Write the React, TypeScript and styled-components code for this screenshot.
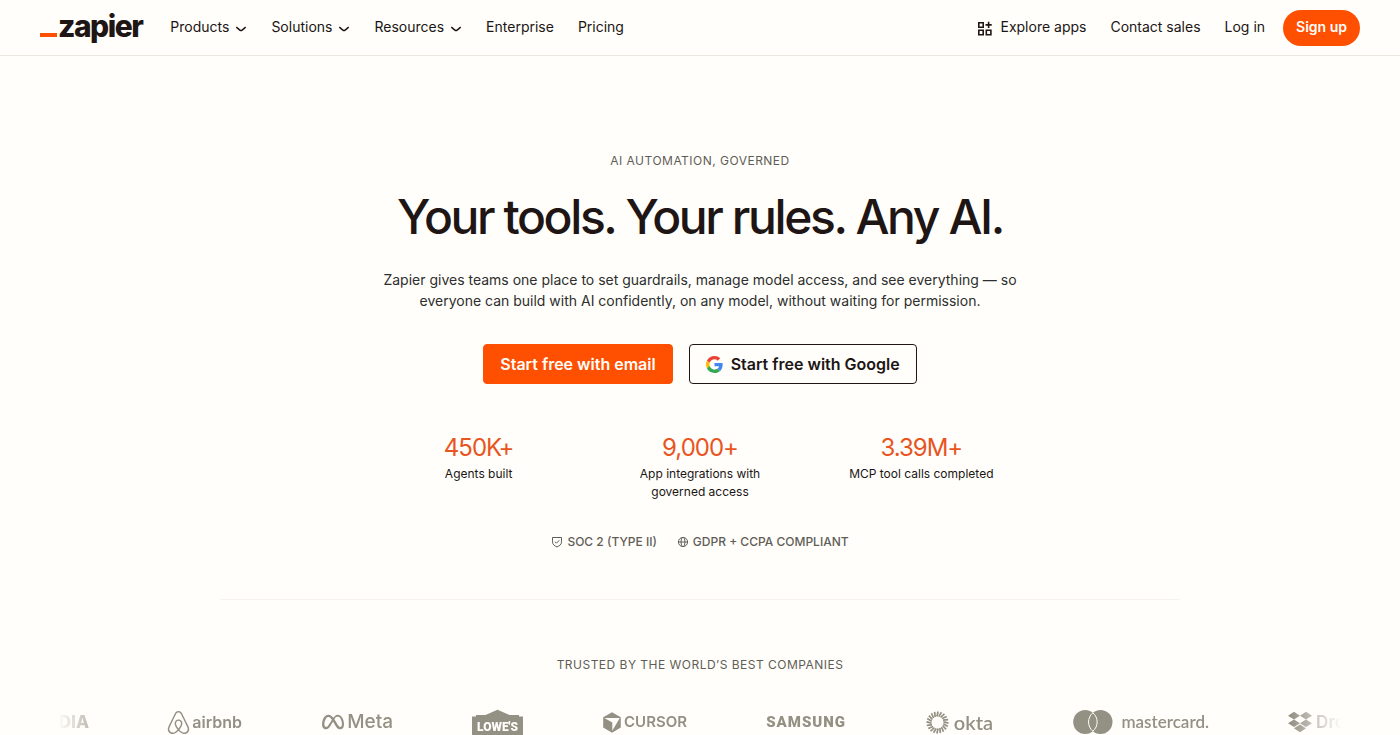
import React from "react";
import styled, { createGlobalStyle } from "styled-components";
import { SiAirbnb, SiMeta, SiDropbox } from "react-icons/si";

const color = {
  page: "#fffefa",
  ink: "#201515",
  text: "#2d2e2e",
  muted: "#5f5d57",
  orange: "#ff4f00",
  stat: "#e8551f",
  line: "#ebe9df",
  logo: "#939084",
};

const GlobalStyle = createGlobalStyle`
  *, *::before, *::after { box-sizing: border-box; }
  body {
    margin: 0;
    background: ${color.page};
    color: ${color.ink};
    font-family: Inter, "Liberation Sans", sans-serif;
    font-size: 14px;
    line-height: 21px;
  }
  h1, p, ul, dl, dd { margin: 0; padding: 0; }
  svg { display: block; flex: none; }
`;

const Header = styled.header`
  display: flex;
  align-items: center;
  justify-content: space-between;
  height: 56px;
  padding: 0 40px;
  border-bottom: 1px solid ${color.line};
`;

const HeaderGroup = styled.nav<{ $gap: number }>`
  display: flex;
  align-items: center;
  gap: ${(p) => p.$gap}px;
`;

const Brand = styled.a`
  display: flex;
  align-items: baseline;
  padding-bottom: 4px;
  color: ${color.ink};
  font-size: 30px;
  font-weight: 800;
  line-height: 32px;
  letter-spacing: -0.05em;
  text-decoration: none;

  &::before {
    content: "";
    width: 17px;
    height: 4px;
    margin-right: 1px;
    background: ${color.orange};
  }
`;

const NavList = styled.ul`
  display: flex;
  align-items: center;
  gap: 24px;
  padding-bottom: 2px;
  list-style: none;
`;

const MenuButton = styled.button`
  display: flex;
  align-items: center;
  gap: 6px;
  padding: 0;
  border: 0;
  background: none;
  color: ${color.ink};
  font: inherit;
  cursor: pointer;
`;

const NavLink = styled.a`
  display: flex;
  align-items: center;
  gap: 8px;
  color: ${color.ink};
  text-decoration: none;
`;

const SignUp = styled.a`
  display: flex;
  align-items: center;
  height: 36px;
  padding: 0 13px 2px;
  border-radius: 18px;
  background: ${color.orange};
  color: ${color.page};
  font-weight: 600;
  text-decoration: none;
`;

const Hero = styled.section`
  display: flex;
  flex-direction: column;
  align-items: center;
  max-width: 960px;
  margin: 0 auto;
  padding: 96px 0 48px;
  border-bottom: 1px solid #f5f3eb;
  text-align: center;
`;

const Eyebrow = styled.p`
  color: ${color.muted};
  font-size: 12px;
  line-height: 18px;
  letter-spacing: 0.04em;
  text-align: center;
  text-transform: uppercase;
`;

const Title = styled.h1`
  margin-top: 19px;
  font-size: 48px;
  font-weight: 500;
  line-height: 56px;
  letter-spacing: -0.05em;
`;

const Lead = styled.p`
  max-width: 640px;
  margin-top: 24px;
  color: ${color.text};
`;

const Actions = styled.div`
  display: flex;
  gap: 16px;
  margin-top: 33px;
`;

const ActionButton = styled.button<{ $primary?: boolean }>`
  display: flex;
  align-items: center;
  gap: 8px;
  height: 40px;
  padding: 0 16px;
  border: 1px solid ${(p) => (p.$primary ? color.orange : color.ink)};
  border-radius: 4px;
  background: ${(p) => (p.$primary ? color.orange : color.page)};
  color: ${(p) => (p.$primary ? color.page : color.ink)};
  font: inherit;
  font-size: 16px;
  font-weight: 600;
  cursor: pointer;
`;

const Stats = styled.dl`
  display: grid;
  grid-template-columns: repeat(3, 1fr);
  gap: 24px;
  width: 100%;
  max-width: 640px;
  margin-top: 48px;
`;

const Stat = styled.div`
  display: flex;
  flex-direction: column-reverse;
  justify-content: flex-end;
`;

const StatLabel = styled.dt`
  font-size: 12px;
  line-height: 18px;
  text-wrap: balance;
`;

const StatValue = styled.dd`
  margin-bottom: 1px;
  color: ${color.stat};
  font-size: 24px;
  line-height: 32px;
  letter-spacing: -1px;
`;

const Badges = styled.ul`
  display: flex;
  gap: 20px;
  margin-top: 32px;
  list-style: none;
`;

const Badge = styled.li`
  display: flex;
  align-items: center;
  gap: 4px;
  color: ${color.muted};
  font-size: 12px;
  font-weight: 500;
  line-height: 18px;
`;

const Trusted = styled.section`
  padding-top: 56px;
  overflow: hidden;
`;

const LogoRow = styled.ul`
  display: flex;
  align-items: center;
  gap: 79px;
  height: 26px;
  margin-top: 35px;
  overflow: hidden;
  list-style: none;
  mask-image: linear-gradient(
    to right,
    transparent 58px,
    #000 110px,
    #000 calc(100% - 110px),
    transparent calc(100% - 58px)
  );
`;

const Logo = styled.li<{ $width: number; $gap?: number }>`
  display: flex;
  flex: none;
  align-items: center;
  justify-content: flex-end;
  gap: ${(p) => p.$gap ?? 4}px;
  width: ${(p) => p.$width}px;
  color: ${color.logo};
`;

const Word = styled.span<{ $size: number; $weight: number; $family?: string; $spacing?: number }>`
  font-family: ${(p) => p.$family ?? "Inter"}, sans-serif;
  font-size: ${(p) => p.$size}px;
  font-weight: ${(p) => p.$weight};
  line-height: 24px;
  letter-spacing: ${(p) => p.$spacing ?? 0}px;
  white-space: nowrap;
`;

const Chevron = () => (
  <svg width="12" height="14" viewBox="0 0 12 14" fill="none" aria-hidden="true">
    <path d="M1.3 7.200 4.900 10.100Q6 11 7.100 10.100L10.700 7.200" stroke="currentColor" strokeWidth="1.5" />
  </svg>
);

const AppsIcon = () => (
  <svg width="15" height="19" viewBox="0 -4 15 19" fill="none" stroke="currentColor" strokeWidth="1.6" aria-hidden="true">
    <path d="M1.800 1.800h4.400v4.400H1.800zM1.800 9.300h4.400v4.400H1.800zM9.300 9.300h4.600v4.400H9.300zM11.600.8v6.200M8.500 3.900h6.200" />
  </svg>
);

const GoogleIcon = () => (
  <svg width="17" height="17" viewBox="0 0 48 48" aria-hidden="true">
    <path fill="#EA4335" d="M24 9.5c3.54 0 6.71 1.22 9.21 3.6l6.85-6.85C35.9 2.38 30.47 0 24 0 14.62 0 6.51 5.38 2.56 13.22l7.98 6.19C12.43 13.72 17.74 9.5 24 9.5z" />
    <path fill="#4285F4" d="M46.98 24.55c0-1.57-.15-3.09-.38-4.55H24v9.02h12.94c-.58 2.96-2.26 5.48-4.78 7.18l7.73 6c4.51-4.18 7.09-10.36 7.09-17.65z" />
    <path fill="#FBBC05" d="M10.53 28.59A14.5 14.5 0 0 1 9.77 24c0-1.6.27-3.14.76-4.59l-7.98-6.19A23.9 23.9 0 0 0 0 24c0 3.88.92 7.54 2.56 10.78l7.97-6.19z" />
    <path fill="#34A853" d="M24 48c6.48 0 11.93-2.13 15.89-5.81l-7.73-6c-2.15 1.45-4.92 2.3-8.16 2.3-6.26 0-11.57-4.22-13.47-9.91l-7.98 6.19C6.51 42.62 14.62 48 24 48z" />
  </svg>
);

const ShieldIcon = () => (
  <svg width="12" height="12" viewBox="0 0 12 12" fill="none" stroke="currentColor" strokeWidth="1" aria-hidden="true">
    <path d="M1.5 1.5h9v4.3c0 2.7-2 4-4.5 5.2C3.5 9.8 1.5 8.5 1.5 5.8z" />
    <path d="m3.9 5.7 1.5 1.5 2.8-2.9" />
  </svg>
);

const GlobeIcon = () => (
  <svg width="12" height="12" viewBox="0 0 12 12" fill="none" stroke="currentColor" strokeWidth="1" aria-hidden="true">
    <circle cx="6" cy="6" r="4.6" />
    <ellipse cx="6" cy="6" rx="2" ry="4.6" />
    <path d="M1.4 6h9.2" />
  </svg>
);

const LowesLogo = () => (
  <svg width="51" height="26" viewBox="0 0 51 26" role="img" aria-label="Lowe's">
    <path d="M0 26V7.5h4V6h9.5L25.500.7 37.500 6H47v1.500h4V26z" fill="currentColor" />
    <text x="25.5" y="21.500" textAnchor="middle" fill={color.page} fontFamily="Roboto, sans-serif" fontSize="12" fontWeight="900">
      LOWE'S
    </text>
  </svg>
);

const CursorMark = () => (
  <svg width="18" height="21" viewBox="0 0 18 21" aria-hidden="true">
    <path d="M9 .3 17.8 5.3v10.3L9 20.7.2 15.6V5.3z" fill="currentColor" />
    <path d="M1.400 6h15.400L9.300 18.800V10.500z" fill={color.page} />
  </svg>
);

const OktaMark = () => (
  <svg width="23" height="23" viewBox="-12 -12 24 24" stroke="currentColor" strokeWidth="1.8" aria-hidden="true">
    {Array.from({ length: 20 }, (_, i) => (
      <path key={i} d="M-.6-6.200.6-11.500" transform={`rotate(${i * 18})`} />
    ))}
  </svg>
);

const MastercardMark = () => (
  <svg width="40" height="24" viewBox="0 0 40 24" aria-hidden="true">
    <circle cx="12.2" cy="12" r="12" fill="currentColor" />
    <circle cx="27.5" cy="12" r="12" fill="currentColor" />
    <path d="M19.850 2.800a12 12 0 0 1 0 18.400a12 12 0 0 1 0-18.400z" fill="none" stroke={color.page} strokeWidth="1" />
  </svg>
);

const menus = ["Products", "Solutions", "Resources"];
const links = ["Enterprise", "Pricing"];
const stats = [
  ["450K+", "Agents built"],
  ["9,000+", "App integrations with governed access"],
  ["3.39M+", "MCP tool calls completed"],
];

export default function App() {
  return (
    <>
      <GlobalStyle />
      <Header>
        <HeaderGroup $gap={28} aria-label="Main">
          <Brand href="#">zapier</Brand>
          <NavList>
            {menus.map((name) => (
              <li key={name}>
                <MenuButton type="button">
                  {name}
                  <Chevron />
                </MenuButton>
              </li>
            ))}
            {links.map((name) => (
              <li key={name}>
                <NavLink href="#">{name}</NavLink>
              </li>
            ))}
          </NavList>
        </HeaderGroup>
        <HeaderGroup $gap={18} aria-label="Account">
          <NavList>
            <li>
              <NavLink href="#">
                <AppsIcon />
                Explore apps
              </NavLink>
            </li>
            <li>
              <NavLink href="#">Contact sales</NavLink>
            </li>
            <li>
              <NavLink href="#">Log in</NavLink>
            </li>
          </NavList>
          <SignUp href="#">Sign up</SignUp>
        </HeaderGroup>
      </Header>
      <main>
        <Hero>
          <Eyebrow>AI automation, governed</Eyebrow>
          <Title>Your tools. Your rules. Any AI.</Title>
          <Lead>
            Zapier gives teams one place to set guardrails, manage model access, and see everything — so everyone can
            build with AI confidently, on any model, without waiting for permission.
          </Lead>
          <Actions>
            <ActionButton type="button" $primary>
              Start free with email
            </ActionButton>
            <ActionButton type="button">
              <GoogleIcon />
              Start free with Google
            </ActionButton>
          </Actions>
          <Stats>
            {stats.map(([value, label]) => (
              <Stat key={value}>
                <StatLabel>{label}</StatLabel>
                <StatValue>{value}</StatValue>
              </Stat>
            ))}
          </Stats>
          <Badges>
            <Badge>
              <ShieldIcon />
              SOC 2 (TYPE II)
            </Badge>
            <Badge>
              <GlobeIcon />
              GDPR + CCPA COMPLIANT
            </Badge>
          </Badges>
        </Hero>
        <Trusted>
          <Eyebrow>Trusted by the world’s best companies</Eyebrow>
          <LogoRow>
            <Logo $width={89}>
              <Word $size={17} $weight={800}>NVIDIA</Word>
            </Logo>
            <Logo $width={74} $gap={2}>
              <SiAirbnb size={23} />
              <Word $size={16} $weight={600}>airbnb</Word>
            </Logo>
            <Logo $width={72} $gap={3}>
              <SiMeta size={22} />
              <Word $size={19} $weight={500}>Meta</Word>
            </Logo>
            <Logo $width={51}>
              <LowesLogo />
            </Logo>
            <Logo $width={85} $gap={3}>
              <CursorMark />
              <Word $size={15} $weight={600}>CURSOR</Word>
            </Logo>
            <Logo $width={80}>
              <Word $size={15} $weight={900} $spacing={1} $family="Roboto">SAMSUNG</Word>
            </Logo>
            <Logo $width={68} $gap={5}>
              <OktaMark />
              <Word $size={20} $weight={600} $family="Lato">okta</Word>
            </Logo>
            <Logo $width={137} $gap={8}>
              <MastercardMark />
              <Word $size={17} $weight={600} $family="Lato">mastercard.</Word>
            </Logo>
            <Logo $width={98}>
              <SiDropbox size={24} />
              <Word $size={17} $weight={600}>Dropbox</Word>
            </Logo>
          </LogoRow>
        </Trusted>
      </main>
    </>
  );
}
